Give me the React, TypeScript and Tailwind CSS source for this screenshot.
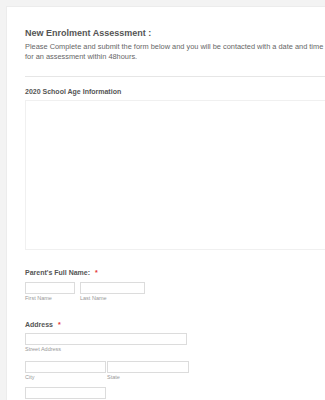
import React from "react";

const font = { fontFamily: '"Liberation Sans", Arial, sans-serif' };

function Input({ w }: { w: string }) {
  return <div className={`h-[12px] border border-[#dcdcdc] bg-white ${w}`} />;
}

export default function App() {
  return (
    <div
      className="w-[325px] h-[400px] overflow-hidden bg-[#f3f3f3] pt-[6px] pl-[6px]"
      style={font}
    >
      <div className="w-[700px] h-[420px] bg-white pl-[18px] pt-[20px] border-l border-t border-[#ececec]">
        <div className="text-[9px] leading-[12px] font-bold text-[#555]">
          New Enrolment Assessment :
        </div>
        <div className="mt-[3px] text-[7.4px] leading-[10px] text-[#666] whitespace-nowrap">
          Please Complete and submit the form below and you will be contacted with a date and time
          <br />
          for an assessment within 48hours.
        </div>
        <div className="mt-[14px] h-px w-[680px] bg-[#e6e6e6]" />
        <div className="mt-[10px] text-[7px] leading-[10px] font-bold text-[#555]">
          2020 School Age Information
        </div>
        <div className="mt-[3px] h-[150px] w-[680px] border border-[#f0f0f0]" />

        <div className="mt-[18px] text-[7px] leading-[10px] font-bold text-[#555] flex">
          <span>Parent's Full Name:</span>
          <span className="ml-[5px] text-[#e53935]">*</span>
        </div>
        <div className="mt-[4px] flex gap-[5px]">
          <div>
            <Input w="w-[50px]" />
            <div className="text-[5.5px] leading-[7px] text-[#999] mt-[1px]">First Name</div>
          </div>
          <div>
            <Input w="w-[65px]" />
            <div className="text-[5.5px] leading-[7px] text-[#999] mt-[1px]">Last Name</div>
          </div>
        </div>

        <div className="mt-[18px] text-[7px] leading-[10px] font-bold text-[#555] flex">
          <span>Address</span>
          <span className="ml-[5px] text-[#e53935]">*</span>
        </div>
        <div className="mt-[3px]">
          <Input w="w-[162px]" />
          <div className="text-[5.5px] leading-[7px] text-[#999] mt-[1px]">Street Address</div>
        </div>
        <div className="mt-[8px] flex gap-[1px]">
          <div>
            <Input w="w-[81px]" />
            <div className="text-[5.5px] leading-[7px] text-[#999] mt-[1px]">City</div>
          </div>
          <div>
            <Input w="w-[82px]" />
            <div className="text-[5.5px] leading-[7px] text-[#999] mt-[1px]">State</div>
          </div>
        </div>
        <div className="mt-[6px]">
          <Input w="w-[81px]" />
        </div>
      </div>
    </div>
  );
}
